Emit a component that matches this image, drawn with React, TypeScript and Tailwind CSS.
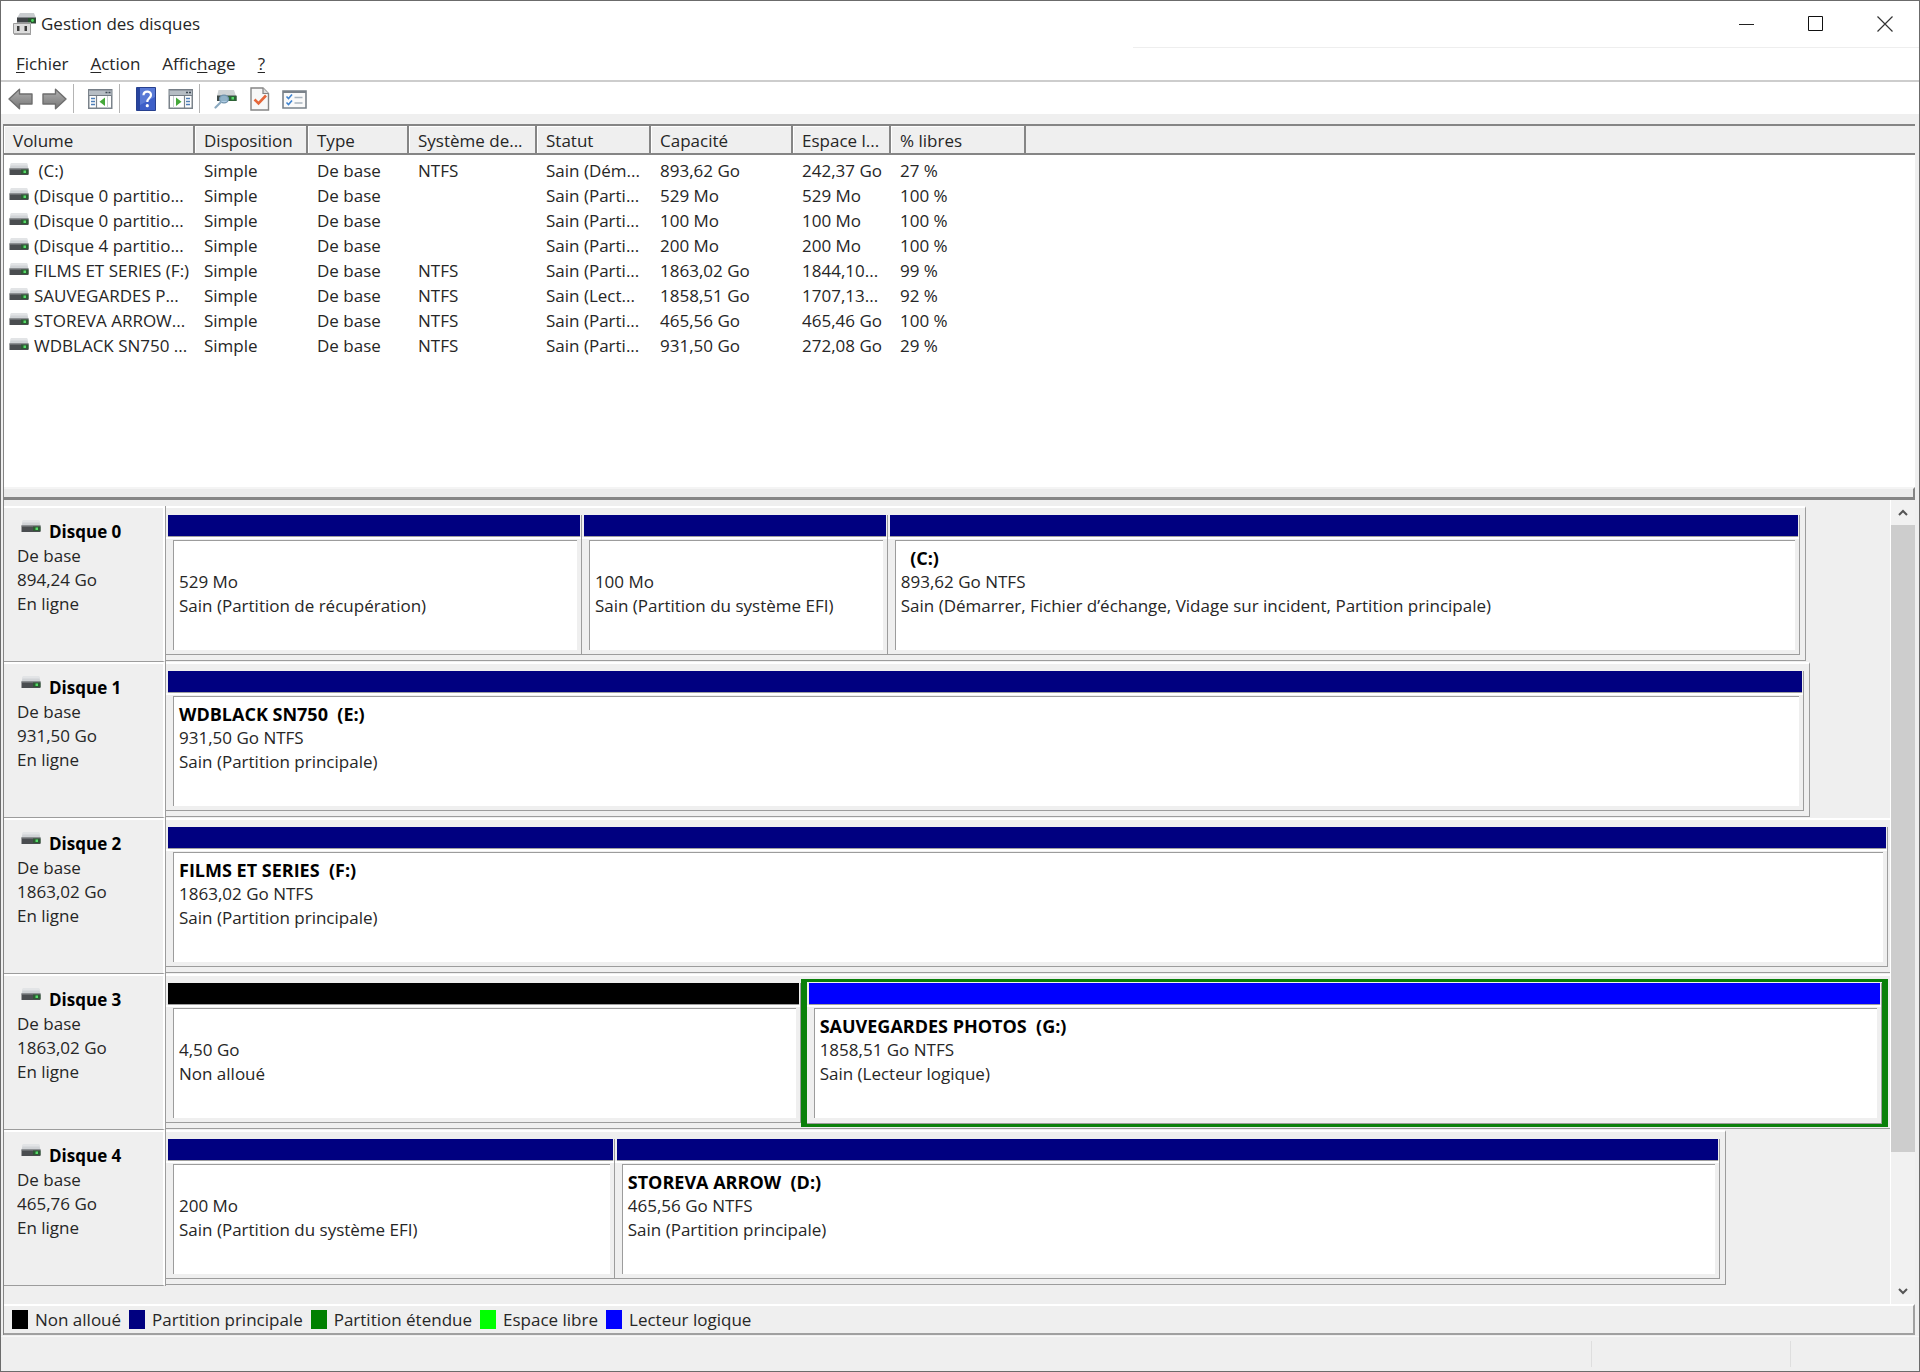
import type { ReactNode } from 'react';

type Kind = 'primary' | 'unallocated' | 'logical';

interface Partition {
  name?: string;
  size: string;
  status: string;
  kind: Kind;
  weight: number;
  extended?: boolean;
}

interface Disk {
  name: string;
  size: string;
  width: number;
  partitions: Partition[];
}

const columns = [
  { label: 'Volume', width: 'w-[191px]' },
  { label: 'Disposition', width: 'w-[113px]' },
  { label: 'Type', width: 'w-[101px]' },
  { label: 'Système de...', width: 'w-[128px]' },
  { label: 'Statut', width: 'w-[114px]' },
  { label: 'Capacité', width: 'w-[142px]' },
  { label: 'Espace l...', width: 'w-[98px]' },
  { label: '% libres', width: 'w-[135px]' },
];

const volumes = [
  ['\u00a0(C:)', 'Simple', 'De base', 'NTFS', 'Sain (Dém...', '893,62 Go', '242,37 Go', '27 %'],
  ['(Disque 0 partitio...', 'Simple', 'De base', '', 'Sain (Parti...', '529 Mo', '529 Mo', '100 %'],
  ['(Disque 0 partitio...', 'Simple', 'De base', '', 'Sain (Parti...', '100 Mo', '100 Mo', '100 %'],
  ['(Disque 4 partitio...', 'Simple', 'De base', '', 'Sain (Parti...', '200 Mo', '200 Mo', '100 %'],
  ['FILMS ET SERIES (F:)', 'Simple', 'De base', 'NTFS', 'Sain (Parti...', '1863,02 Go', '1844,10...', '99 %'],
  ['SAUVEGARDES P...', 'Simple', 'De base', 'NTFS', 'Sain (Lect...', '1858,51 Go', '1707,13...', '92 %'],
  ['STOREVA ARROW...', 'Simple', 'De base', 'NTFS', 'Sain (Parti...', '465,56 Go', '465,46 Go', '100 %'],
  ['WDBLACK SN750 ...', 'Simple', 'De base', 'NTFS', 'Sain (Parti...', '931,50 Go', '272,08 Go', '29 %'],
];

const disks: Disk[] = [
  {
    name: 'Disque 0',
    size: '894,24 Go',
    width: 95.1,
    partitions: [
      { size: '529 Mo', status: 'Sain (Partition de récupération)', kind: 'primary', weight: 416 },
      { size: '100 Mo', status: 'Sain (Partition du système EFI)', kind: 'primary', weight: 306 },
      {
        name: '\u00a0\u00a0(C:)',
        size: '893,62 Go NTFS',
        status: 'Sain (Démarrer, Fichier d’échange, Vidage sur incident, Partition principale)',
        kind: 'primary',
        weight: 912,
      },
    ],
  },
  {
    name: 'Disque 1',
    size: '931,50 Go',
    width: 95.35,
    partitions: [
      { name: 'WDBLACK SN750\u00a0 (E:)', size: '931,50 Go NTFS', status: 'Sain (Partition principale)', kind: 'primary', weight: 1 },
    ],
  },
  {
    name: 'Disque 2',
    size: '1863,02 Go',
    width: 100,
    partitions: [
      { name: 'FILMS ET SERIES\u00a0 (F:)', size: '1863,02 Go NTFS', status: 'Sain (Partition principale)', kind: 'primary', weight: 1 },
    ],
  },
  {
    name: 'Disque 3',
    size: '1863,02 Go',
    width: 100,
    partitions: [
      { size: '4,50 Go', status: 'Non alloué', kind: 'unallocated', weight: 635 },
      {
        name: 'SAUVEGARDES PHOTOS\u00a0 (G:)',
        size: '1858,51 Go NTFS',
        status: 'Sain (Lecteur logique)',
        kind: 'logical',
        weight: 1076,
        extended: true,
      },
    ],
  },
  {
    name: 'Disque 4',
    size: '465,76 Go',
    width: 90.5,
    partitions: [
      { size: '200 Mo', status: 'Sain (Partition du système EFI)', kind: 'primary', weight: 449 },
      { name: 'STOREVA ARROW\u00a0 (D:)', size: '465,56 Go NTFS', status: 'Sain (Partition principale)', kind: 'primary', weight: 1106 },
    ],
  },
];

const legend = [
  { label: 'Non alloué', color: 'bg-black' },
  { label: 'Partition principale', color: 'bg-[#000080]' },
  { label: 'Partition étendue', color: 'bg-[#008000]' },
  { label: 'Espace libre', color: 'bg-[#00ff00]' },
  { label: 'Lecteur logique', color: 'bg-[#0000ff]' },
];

const barColors: Record<Kind, string> = {
  primary: 'bg-[#000080]',
  unallocated: 'bg-black',
  logical: 'bg-[#0000ff]',
};

function DriveIcon() {
  return (
    <svg width="20" height="15" viewBox="0 0 20 15" className="shrink-0" aria-hidden="true">
      <path d="M2 0h16l1.500 6H.5z" fill="#d0d3d6" />
      <path d="M2 0h16l.7 2.500H1.300z" fill="#e2e4e6" />
      <path d="M.5 5.500h19V12H.5z" fill="#4a4d50" />
      <path d="M.5 5.500h19v1H.5z" fill="#8a8e91" />
      <path d="M12 6.500h7.500V11H12z" fill="#2e5a34" />
      <path d="M14.500 7.500h2.500v2.500h-2.500z" fill="#55dc68" />
    </svg>
  );
}

function AppIcon() {
  return (
    <svg width="24" height="24" viewBox="0 0 24 24" className="shrink-0" aria-hidden="true">
      <path d="M7 1h14l2 5H4z" fill="#c9cccf" />
      <path d="M4 5.500h19v6H4z" fill="#3f4346" />
      <path d="M15 6h7.500v5H15z" fill="#28502e" />
      <circle cx="19.500" cy="8.500" r="1.400" fill="#4bd45e" />
      <path d="M3 10.500h15v3H3z" fill="#e6e6e6" />
      <path d="M.5 11.500h17v10H.5z" fill="#dcdcdc" stroke="#9b9b9b" />
      <path d="M4 14h2.500v5H4zM11.500 14H14v5h-2.500z" fill="#3c3c3c" />
      <path d="M1 21h17v2H1z" fill="#a3a3a3" />
    </svg>
  );
}

function ArrowIcon({ flip = false }: { flip?: boolean }) {
  return (
    <svg width="25" height="22" viewBox="0 0 25 22" className={flip ? '-scale-x-100' : ''} aria-hidden="true">
      <defs>
        <linearGradient id="arrow" x1="0" y1="0" x2="0" y2="1">
          <stop offset="0" stopColor="#b0b0b0" />
          <stop offset="0.500" stopColor="#939393" />
          <stop offset="1" stopColor="#757575" />
        </linearGradient>
      </defs>
      <path d="M1 11 11.500 1.200v4.800H24v10H11.500v4.800z" fill="url(#arrow)" stroke="#6e6e6e" strokeWidth="1.400" strokeLinejoin="round" />
    </svg>
  );
}

function ConsoleIcon({ flip = false }: { flip?: boolean }) {
  return (
    <svg width="25" height="20" viewBox="0 0 25 20" className={flip ? '-scale-x-100' : ''} aria-hidden="true">
      <path d="M.75.75h23v18.500h-23z" fill="#fff" stroke="#7b838b" strokeWidth="1.500" />
      <path d="M1 1h22.500v5.500H1z" fill="#b6bdc4" />
      <path d="M1 1h22.500M1 6.500h22.500" stroke="#747c85" strokeWidth="1.200" />
      <path d={flip ? 'M2 3.500h2M5 3.500h2' : 'M17.500 3.500h2M20.500 3.500h2'} stroke="#3f4a54" strokeWidth="1.500" />
      <path d="M8.500 7v12" stroke="#7b838b" strokeWidth="1.200" />
      <path d="M3 9.500h4M3 12.500h4M3 15.500h4" stroke="#4f7fb8" strokeWidth="1.500" />
      <path d="M17 8.500V17l-5.500-4.200z" fill="#45a83a" />
      <path d="M19.500 7v12" stroke="#c8cdd1" />
    </svg>
  );
}

function HelpIcon() {
  return (
    <svg width="20" height="24" viewBox="0 0 20 24" aria-hidden="true">
      <path d="M.5.5h19v23H.5z" fill="#3d5fc8" stroke="#27408f" />
      <path d="M1 1h3v22H1z" fill="#27449f" />
      <path d="M4 1h15v9L4 18z" fill="#6c8ce0" opacity=".6" />
      <path d="M7.500 8.200C7.500 3.500 15 3.500 15 8c0 3-3.700 3.200-3.700 7" fill="none" stroke="#fff" strokeWidth="2.200" />
      <circle cx="11.300" cy="18.700" r="1.600" fill="#fff" />
    </svg>
  );
}

function RescanIcon() {
  return (
    <svg width="24" height="20" viewBox="0 0 24 20" aria-hidden="true">
      <path d="M4.500 1h15.500l2 6H3z" fill="#cfd3d5" />
      <path d="M3 6.500h19.500v5.500H3z" fill="#3f4a48" />
      <path d="M14 7h8.500v5H14z" fill="#2c6336" />
      <path d="M17.500 8h2.500v2.500h-2.500z" fill="#55dc68" />
      <ellipse cx="10" cy="10" rx="4.500" ry="3.800" fill="#9fc3de" fillOpacity=".85" stroke="#7093ad" strokeWidth="1.200" />
      <path d="m6.500 13.500-5 5" stroke="#8aa9c0" strokeWidth="2.200" strokeLinecap="round" />
    </svg>
  );
}

function CheckDocIcon() {
  return (
    <svg width="20" height="24" viewBox="0 0 20 24" aria-hidden="true">
      <path d="M1 1h12l5.500 5.500V23H1z" fill="#f8f8f8" stroke="#858585" strokeWidth="1.400" />
      <path d="M13 1v5.500h5.500" fill="#ddd" stroke="#858585" strokeWidth="1.200" />
      <path d="m4.500 12.500 4 4 7.500-8" fill="none" stroke="#e5673a" strokeWidth="2.600" />
    </svg>
  );
}

function TaskListIcon() {
  return (
    <svg width="25" height="19" viewBox="0 0 25 19" aria-hidden="true">
      <path d="M1 1h23v17H1z" fill="#fafafa" stroke="#7a828a" strokeWidth="1.600" />
      <path d="M1 2h23" stroke="#7a828a" strokeWidth="2" />
      <path d="m4.500 6.500 2 2 3.500-4M4.500 12.500l2 2 3.500-4" fill="none" stroke="#3f83cf" strokeWidth="1.600" />
      <path d="M12.500 7.500h8M12.500 13h8" stroke="#a9b5c0" strokeWidth="1.300" />
    </svg>
  );
}

function ToolButton({ label, children }: { label: string; children: ReactNode }) {
  return (
    <button type="button" aria-label={label} className="flex h-full w-[34px] items-center justify-center pt-[2px]">
      {children}
    </button>
  );
}

function ToolSeparator() {
  return <span className="mr-[9px] ml-[2px] h-[29px] w-px bg-[#b4b4b4]" />;
}

function TitleBar() {
  return (
    <header className="flex h-[46px] items-center">
      <h1 className="flex flex-1 items-center gap-1 pl-3">
        <AppIcon />
        Gestion des disques
      </h1>
      <button type="button" aria-label="Réduire" className="flex h-full w-[69px] items-center justify-center">
        <svg width="16" height="16" viewBox="0 0 16 16">
          <path d="M0 8.500h15" stroke="#222" />
        </svg>
      </button>
      <button type="button" aria-label="Agrandir" className="flex h-full w-[69px] items-center justify-center">
        <svg width="16" height="16" viewBox="0 0 16 16">
          <path d="M.5.5h14v14H.5z" fill="none" stroke="#111" />
        </svg>
      </button>
      <button type="button" aria-label="Fermer" className="flex h-full w-[69px] items-center justify-center">
        <svg width="16" height="16" viewBox="0 0 16 16">
          <path d="m.5.5 15 15m0-15-15 15" stroke="#333" strokeWidth="1.200" />
        </svg>
      </button>
    </header>
  );
}

function MenuBar() {
  return (
    <nav className="flex h-8 items-center gap-[22px] pl-[15px]">
      <button type="button">
        <u className="underline-offset-2">F</u>ichier
      </button>
      <button type="button">
        <u className="underline-offset-2">A</u>ction
      </button>
      <button type="button">
        Affic<u className="underline-offset-2">h</u>age
      </button>
      <button type="button">
        <u className="underline-offset-2">?</u>
      </button>
    </nav>
  );
}

function Toolbar() {
  return (
    <div className="flex h-[34px] items-center border-t-2 border-[#cdcdcd] pl-[2px]">
      <ToolButton label="Précédent">
        <ArrowIcon />
      </ToolButton>
      <ToolButton label="Suivant">
        <ArrowIcon flip />
      </ToolButton>
      <ToolSeparator />
      <ToolButton label="Arborescence de la console">
        <ConsoleIcon />
      </ToolButton>
      <ToolSeparator />
      <ToolButton label="Aide">
        <HelpIcon />
      </ToolButton>
      <ToolButton label="Volet Actions">
        <ConsoleIcon flip />
      </ToolButton>
      <ToolSeparator />
      <ToolButton label="Analyser les disques">
        <RescanIcon />
      </ToolButton>
      <ToolButton label="Vérifier">
        <CheckDocIcon />
      </ToolButton>
      <ToolButton label="Propriétés">
        <TaskListIcon />
      </ToolButton>
    </div>
  );
}

function VolumeList() {
  return (
    <section className="min-h-[363px] border-t-2 border-[#858585] bg-white">
      <table className="w-full table-fixed border-separate border-spacing-0 text-left whitespace-nowrap">
        <thead>
          <tr className="h-[29px] bg-[#efefef]">
            {columns.map((column) => (
              <th
                key={column.label}
                scope="col"
                className={`${column.width} border-r-2 border-b-2 border-[#858585] p-0 pt-[3px] pl-[9px] font-normal shadow-[inset_1px_1px_0_#fff]`}
              >
                {column.label}
              </th>
            ))}
            <td className="border-b-2 border-[#858585] p-0" />
          </tr>
        </thead>
        <tbody>
          <tr className="h-[3px]" aria-hidden="true" />
          {volumes.map((cells, row) => (
            <tr key={row} className="h-[25px]">
              {cells.map((cell, i) => (
                <td key={i} className={i === 0 ? 'p-0 pl-[5px]' : 'p-0 pl-[9px]'}>
                  {i === 0 ? (
                    <span className="flex items-center gap-[5px]">
                      <DriveIcon />
                      {cell}
                    </span>
                  ) : (
                    cell
                  )}
                </td>
              ))}
              <td />
            </tr>
          ))}
        </tbody>
      </table>
    </section>
  );
}

function PartitionBox({ partition }: { partition: Partition }) {
  return (
    <div className="flex min-w-0 flex-1 flex-col border-r border-b border-[#9c9c9c]">
      <div className="border-b-2 border-white">
        <div className={`mr-px ml-[2px] h-[22px] border-b border-[#a0a0a0] ${barColors[partition.kind]}`} />
      </div>
      <div className="mt-px mr-1 mb-1 ml-[7px] h-[110px] overflow-hidden border-t border-l border-[#9c9c9c] bg-white pt-[5px] pl-[5px] leading-6 whitespace-nowrap">
        <p className="h-6 text-[18px] font-bold text-black">{partition.name}</p>
        <p>{partition.size}</p>
        <p>{partition.status}</p>
      </div>
    </div>
  );
}

function DiskRow({ disk }: { disk: Disk }) {
  const full = disk.width === 100;
  return (
    <div className="flex h-[156px]">
      <div className="w-[161px] shrink-0 border-t-2 border-r-2 border-b border-t-white border-r-white border-b-[#9c9c9c] pt-3 pl-[13px] leading-6">
        <h2 className="flex gap-2 pl-1 font-bold text-black">
          <DriveIcon />
          {disk.name}
        </h2>
        <p>De base</p>
        <p>{disk.size}</p>
        <p>En ligne</p>
      </div>
      <div className="min-w-0 flex-1 border-l border-[#9c9c9c]">
        <div
          className={`flex h-[155px] border-t-2 border-b border-t-white border-b-[#9c9c9c] pt-[7px] pb-[5px] ${full ? 'pr-[2px]' : 'border-r border-r-[#9c9c9c] pr-[5px]'}`}
          style={{ width: `${disk.width}%` }}
        >
          {disk.partitions.map((partition, i) =>
            partition.extended ? (
              <div
                key={i}
                className="-mt-1 -mb-1 flex min-w-0 basis-0 border-x-[6px] border-y-[3px] border-[#0a800a] pt-px"
                style={{ flexGrow: partition.weight }}
              >
                <PartitionBox partition={partition} />
              </div>
            ) : (
              <div key={i} className="flex min-w-0 basis-0" style={{ flexGrow: partition.weight }}>
                <PartitionBox partition={partition} />
              </div>
            ),
          )}
        </div>
      </div>
    </div>
  );
}

function ScrollBar() {
  return (
    <div className="flex w-[25px] shrink-0 flex-col border-l border-white bg-[#f1f1f1]">
      <button type="button" aria-label="Défiler vers le haut" className="flex h-[25px] items-center justify-center">
        <svg width="10" height="7" viewBox="0 0 10 7">
          <path d="m1 6 4-4 4 4" fill="none" stroke="#555" strokeWidth="2" />
        </svg>
      </button>
      <div className="grow-[627] bg-[#cdcdcd]" />
      <div className="grow-[127]" />
      <button type="button" aria-label="Défiler vers le bas" className="flex h-[25px] items-center justify-center">
        <svg width="10" height="7" viewBox="0 0 10 7">
          <path d="m1 1 4 4 4-4" fill="none" stroke="#555" strokeWidth="2" />
        </svg>
      </button>
    </div>
  );
}

export default function App() {
  return (
    <div className="flex min-h-screen flex-col border border-[#6b6b6b] bg-[#efefef] font-['Open_Sans','Noto_Sans',sans-serif] text-[17px] leading-6 text-[#262626]">
      <div className="bg-white">
        <TitleBar />
        <div className="ml-auto h-px w-[41%] bg-[#eeeeee]" />
        <MenuBar />
        <Toolbar />
      </div>

      <main className="mt-[10px] mr-1 ml-[2px] flex flex-1 flex-col border-l border-[#858585]">
        <VolumeList />
        <div className="h-[13px] border-t-2 border-r-2 border-b-[3px] border-t-[#f4f4f4] border-r-[#858585] border-b-[#858585] bg-[#ebebeb]" />
        <div className="flex flex-1">
          <div className="min-w-0 flex-1 pt-[6px]">
            {disks.map((disk) => (
              <DiskRow key={disk.name} disk={disk} />
            ))}
          </div>
          <ScrollBar />
        </div>
        <ul className="flex h-[31px] items-center gap-2 border-t-2 border-r-2 border-b-2 border-t-white border-r-[#a0a0a0] border-b-[#a0a0a0] pl-2">
          {legend.map((item) => (
            <li key={item.label} className="flex items-center gap-[7px]">
              <span className={`h-[19px] w-4 ${item.color}`} />
              {item.label}
            </li>
          ))}
        </ul>
      </main>

      <footer className="mt-px flex h-[35px] justify-end border-t border-[#f8f8f8] py-1">
        <div className="w-[199px] border-l border-[#dedede]" />
        <div className="w-[129px] border-l border-[#dedede]" />
      </footer>
    </div>
  );
}
